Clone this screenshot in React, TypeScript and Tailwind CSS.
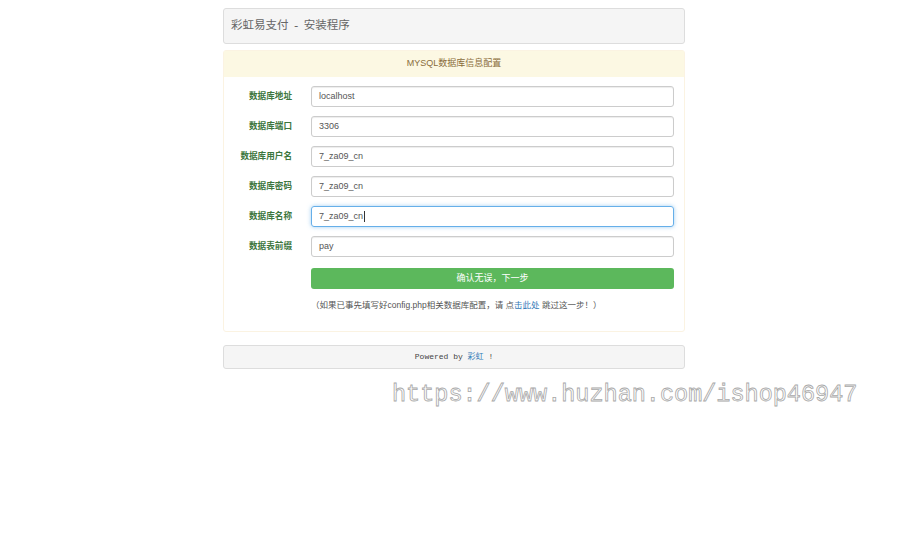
import React from "react";

interface Field {
  label: string;
  value: string;
  focused?: boolean;
}

const fields: Field[] = [
  { label: "数据库地址", value: "localhost" },
  { label: "数据库端口", value: "3306" },
  { label: "数据库用户名", value: "7_za09_cn" },
  { label: "数据库密码", value: "7_za09_cn" },
  { label: "数据库名称", value: "7_za09_cn", focused: true },
  { label: "数据表前缀", value: "pay" },
];

const sans = "font-['Liberation_Sans','Noto_Sans_CJK_SC',sans-serif]";

const App: React.FC = () => {
  return (
    <div className={`relative min-h-[555px] bg-white pl-2 pt-2 ${sans}`}>
      <div className="mx-auto w-[462px]">
        {/* title bar */}
        <div className="flex h-[36px] items-center rounded-[3px] border border-[#dddddd] bg-[#f5f5f5] px-[7px]">
          <span className="font-['Liberation_Serif','Noto_Sans_CJK_SC',serif] text-[11.5px] text-[#666]">
            彩虹易支付 &nbsp;- &nbsp;安装程序
          </span>
        </div>

        {/* mysql panel */}
        <div className="mt-[6px] rounded-[3px] border border-[#fbf3e2] bg-white">
          <div className="flex h-[26px] items-center justify-center bg-[#fcf8e3] text-[9px] text-[#8a6d3b]">
            MYSQL数据库信息配置
          </div>
          <div className="px-[10px] pb-[19px] pt-[9px]">
            <div className="flex flex-col gap-[9px]">
              {fields.map((f) => (
                <div key={f.label} className="flex items-center gap-[19px]">
                  <div className="w-[58px] text-right text-[8.6px] font-bold text-[#3c763d]">
                    {f.label}
                  </div>
                  <div
                    className={
                      f.focused
                        ? "flex h-[21px] flex-1 items-center rounded-[3px] border border-[#66afe9] px-[7px] text-[9px] text-[#555] shadow-[0_0_4px_rgba(102,175,233,0.6)]"
                        : "flex h-[21px] flex-1 items-center rounded-[3px] border border-[#cccccc] px-[7px] text-[9px] text-[#555] shadow-[inset_0_1px_1px_rgba(0,0,0,0.075)]"
                    }
                  >
                    {f.value}
                    {f.focused && <span className="ml-px inline-block h-[11px] w-px bg-[#333]" />}
                  </div>
                </div>
              ))}
            </div>

            <div className="ml-[77px] mt-[11px]">
              <div className="flex h-[21px] items-center justify-center rounded-[3px] bg-[#5cb85c] text-[9px] text-white">
                确认无误，下一步
              </div>
              <p className="mt-[10px] text-[8.5px] text-[#555]">
                （如果已事先填写好config.php相关数据库配置，请 点
                <span className="text-[#337ab7]">击此处</span> 跳过这一步！）
              </p>
            </div>
          </div>
        </div>

        {/* footer */}
        <div className="mt-[13px] flex h-[24px] items-center justify-center rounded-[3px] border border-[#dddddd] bg-[#f5f5f5] font-['Liberation_Mono','Noto_Sans_CJK_SC',monospace] text-[8px] text-[#444]">
          Powered by&nbsp;<span className="text-[#337ab7]">彩虹</span>&nbsp;!
        </div>
      </div>

      {/* watermark */}
      <div className="pointer-events-none absolute left-[392px] top-[383px] font-['Liberation_Mono',monospace] text-[23.5px] leading-none text-white [-webkit-text-stroke:0.8px_#a8a8a8]">
        https://www.huzhan.com/ishop46947
      </div>
    </div>
  );
};

export default App;
